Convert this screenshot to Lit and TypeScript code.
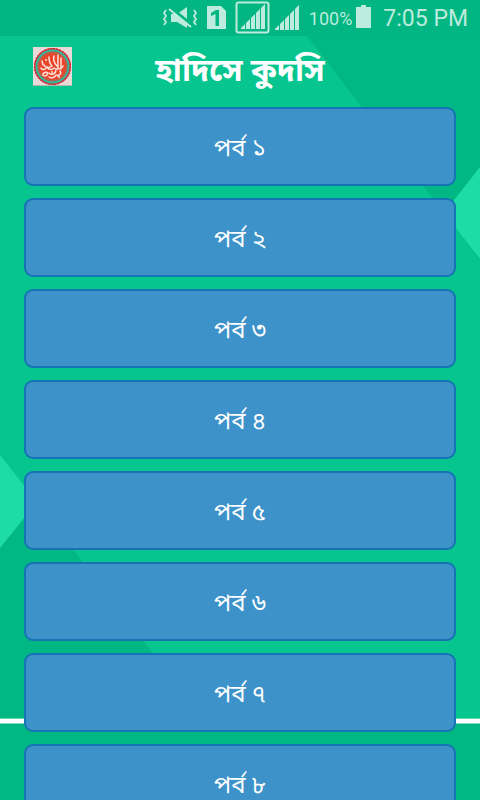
import { LitElement, html, css, svg } from "lit";
import { customElement } from "lit/decorators.js";

const DIGITS = ["১", "২", "৩", "৪", "৫", "৬", "৭", "৮"];

@customElement("app-backdrop")
class AppBackdrop extends LitElement {
  static styles = css`
    :host { display: block; }
    svg { display: block; width: 100%; height: 100%; }
  `;
  render() {
    return html`<svg viewBox="0 0 480 800" preserveAspectRatio="none" aria-hidden="true">
      <rect width="480" height="800" fill="#07c58f" />
      <path d="M279 0H480V260L444 213Z" fill="#01b784" />
      <path d="M480 167L444 213L480 259V261Z" fill="#1edca6" />
      <path d="M0 548L37 502L203 719H0Z" fill="#01b784" />
      <path d="M0 455L37 502L0 548Z" fill="#1edca6" />
      <rect y="718" width="480" height="82" fill="#01b784" />
      <rect y="718" width="480" height="1" fill="#5fdbb5" />
      <rect y="719" width="480" height="4" fill="#fff" />
      <rect y="723" width="480" height="1" fill="#80dbc1" />
    </svg>`;
  }
}

@customElement("status-bar")
class StatusBar extends LitElement {
  static styles = css`
    :host {
      display: flex; align-items: center; justify-content: flex-end; flex: none;
      box-sizing: border-box; height: 36px; padding-right: 12px;
      background: #02b683; color: #bdebdd;
      font-family: Roboto, "Noto Sans", sans-serif; white-space: nowrap;
    }
    svg { display: block; flex: none; }
    .percent { font-size: 18px; line-height: 36px; margin-left: 6px; padding-top: 2px; }
    .battery { margin: 0 11px 4px 4px; }
    .time { font-size: 23px; line-height: 36px; padding-top: 2px; }
  `;
  render() {
    const bars = svg`<path d="M0 24V23L4 19V24ZM5 24V18L9 14V24ZM10 24V13L14 9V24ZM15 24V8L19 4V24ZM20 24V3L24 -1V24Z" />`;
    return html`
      <svg width="146" height="36" viewBox="157 0 146 36" fill="#bdebdd" aria-hidden="true">
        <path d="M171 14h6l10-7v21l-10-6h-6z" />
        <path d="M171 8L192 25" stroke="#02b683" stroke-width="3" />
        <path d="M169 9L191 27" stroke="#bdebdd" stroke-width="2" />
        <path d="M166 10l-2 3 2 3-2 3 2 3-2 3M194 10l2 3-2 3 2 3-2 3 2 3" fill="none" stroke="#bdebdd" stroke-width="1.800" />
        <path d="M207 6H221L226 11V29H207Z" />
        <path d="M211 13l5-3h3v16h-3.500V14l-4.500 2z" fill="#02b683" />
        <rect x="236.500" y="2.500" width="32" height="30" rx="2" fill="none" stroke="#bdebdd" stroke-width="2" />
        <g transform="translate(241 5)">${bars}</g>
        <g transform="translate(275 6)">${bars}</g>
      </svg>
      <span class="percent">100%</span>
      <svg class="battery" width="16" height="23" viewBox="0 0 16 23" fill="#bdebdd" aria-hidden="true">
        <path d="M0 2H5V0H10V2H15V23H0Z" />
      </svg>
      <span class="time">7:05 PM</span>
    `;
  }
}

@customElement("app-root")
class AppRoot extends LitElement {
  static styles = css`
    :host {
      display: block; position: relative; height: 100vh; overflow: hidden;
      font-family: "Noto Sans Bengali", "Noto Sans", sans-serif; color: #fff;
    }
    app-backdrop { position: absolute; inset: 0; }
    .screen { position: relative; display: flex; flex-direction: column; height: 100%; }
    header {
      display: grid; grid-template-columns: 40px 1fr 40px; align-items: center; flex: none;
      height: 71px; padding: 0 32px; box-sizing: border-box;
    }
    .logo { display: block; margin-bottom: 10px; }
    h1 { margin: 0; padding-top: 2px; text-align: center; font-size: 32px; line-height: 40px; font-weight: 700; }
    main {
      display: flex; flex-direction: column; gap: 12px; padding: 0 24px 12px;
      flex: 1; min-height: 0; overflow-y: auto; scrollbar-width: none;
    }
    button {
      flex: none; height: 79px; border: 2px solid #1673b4; border-radius: 9px;
      background: #3d92c9; color: #fff; padding: 6px 0 0; font: inherit;
      font-size: 24px; line-height: 36px; cursor: pointer;
    }
  `;
  render() {
    return html`
      <app-backdrop></app-backdrop>
      <div class="screen">
        <status-bar></status-bar>
        <header>
          <svg class="logo" width="41" height="41" viewBox="0 0 41 41" aria-hidden="true">
            <rect x="1" y="1" width="39" height="39" fill="#e9dad9" />
            <rect x="1" y="39" width="39" height="1" fill="#a9b8ac" />
            <circle cx="20.500" cy="20.500" r="18.500" fill="#e5483a" />
            <circle cx="20.500" cy="20.500" r="17.800" fill="none" stroke="#c9233d" stroke-width="1.500" stroke-dasharray="2 1" />
            <circle cx="20.500" cy="20.500" r="16" fill="none" stroke="#2fb79c" stroke-width="2" />
            <circle cx="20.500" cy="20.500" r="14.200" fill="#e8452b" stroke="#a0705a" stroke-width="1" />
            <g fill="none" stroke="#fde3da" stroke-width="1.500" stroke-linecap="round" stroke-linejoin="round">
              <path d="M26 9V22M29 12V23M22 10C21 14 23 18 25 20M17 11C17 15 18 18 20 20C17 22 13 22 12 19" />
              <path d="M10 15L11 19M9 22C11 25 14 23 15 21C17 24 20 24 22 22C25 24 30 23 31 20" />
              <path d="M11 28C13 25 17 26 15 29C13 31 10 29 11 28M17 27C20 30 24 27 24 24M24 29C27 31 30 27 28 25M17 31C20 33 23 31 24 29" />
            </g>
            <g fill="#fde3da">
              <circle cx="14" cy="14" r="1" /><circle cx="20" cy="26" r="1" /><circle cx="27" cy="31" r="1" />
            </g>
          </svg>
          <h1>হাদিসে কুদসি</h1>
        </header>
        <main>
          ${DIGITS.map((d) => html`<button type="button">পর্ব ${d}</button>`)}
        </main>
      </div>
    `;
  }
}
